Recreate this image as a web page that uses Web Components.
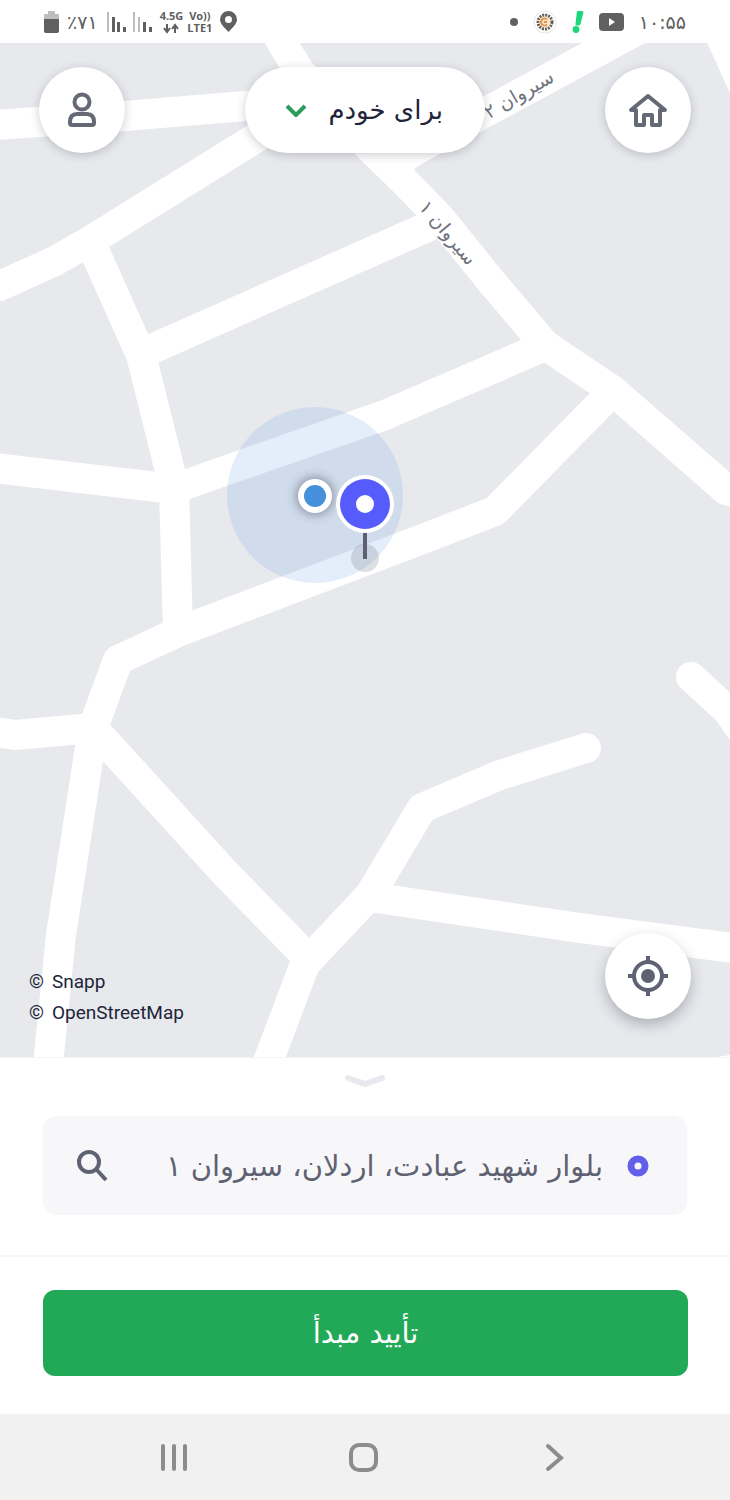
<!DOCTYPE html>
<html lang="fa">
<head>
<meta charset="utf-8">
<meta name="viewport" content="width=device-width, initial-scale=1">
<title>تأیید مبدأ</title>
<style>
  body {
    margin: 0;
    font-family: "DejaVu Sans", sans-serif;
    color: #21253a;
    background: #fff;
  }
</style>
</head>
<body>
<ride-app></ride-app>

<script>
(function () {
  // Registers an element whose shadow root is a clone of the given markup.
  function define(name, html) {
    const template = document.createElement("template");
    template.innerHTML = html;

    window.customElements.define(
      name,
      class extends HTMLElement {
        constructor() {
          super();
          this.attachShadow({ mode: "open" });
          this.shadowRoot.appendChild(template.content.cloneNode(true));
        }

        // Passes the host's label on to the real button.
        connectedCallback() {
          if (this.hasAttribute("label")) {
            this.shadowRoot
              .querySelector("button")
              .setAttribute("aria-label", this.getAttribute("label"));
          }
        }
      }
    );
  }

  define("status-bar", `
    <style>
      :host {
        display: flex;
        justify-content: space-between;
        align-items: center;
        height: 43px;
        padding: 0 44px;
        box-sizing: border-box;
        color: #606060;
        background: #fff;
      }
      .group {
        display: flex;
        align-items: center;
        gap: 8px;
      }
      .group.end {
        gap: 15px;
      }
      svg {
        display: block;
      }
      .digits {
        font-size: 19px;
        line-height: 24px;
      }
      .net {
        display: flex;
        flex-direction: column;
        align-items: center;
        font: bold 11px/12px "Open Sans", sans-serif;
      }
      .radio {
        display: flex;
        gap: 4px;
      }
    </style>
    <div class="group">
      <svg width="15" height="22" viewBox="0 0 15 22">
        <path fill="#bdbdbd" d="M4 0h7v3h3q1 0 1 1v5H0V4q0-1 1-1h3z"/>
        <path fill="#606060" d="M0 8h15v12q0 2-2 2H2q-2 0-2-2z"/>
      </svg>
      <span class="digits">٪۷۱</span>
      <svg width="46" height="20" viewBox="0 0 46 20" fill="#606060">
        <path fill="#bdbdbd" d="M1 0h2v20H1zM27 0h2v20h-2zM32 5h2v15h-2z"/>
        <path d="M6 5h3v15H6zM11 10h3v10h-3zM17 15h3v5h-3zM37 10h3v10h-3zM43 15h3v5h-3z"/>
      </svg>
      <div class="radio">
        <div class="net">
          <span>4.5G</span>
          <svg width="16" height="12" viewBox="0 0 16 12" fill="none" stroke="#606060" stroke-width="2">
            <path d="M4 2v8M1 6l3 4 3-4M12 11V3M9 7l3-4 3 4"/>
          </svg>
        </div>
        <div class="net"><span>Vo))</span><span>LTE1</span></div>
      </div>
      <svg width="17" height="22" viewBox="0 0 17 22">
        <path fill="#606060" fill-rule="evenodd" d="M8.500 0a8.500 8.500 0 0 1 8.500 8.500C17 13 12 17 8.500 21 5 17 0 13 0 8.500A8.500 8.500 0 0 1 8.500 0zm0 5a3.500 3.500 0 1 0 0 7 3.500 3.500 0 0 0 0-7z"/>
      </svg>
    </div>
    <div class="group end">
      <svg width="8" height="8" viewBox="0 0 8 8"><circle cx="4" cy="4" r="4" fill="#606060"/></svg>
      <svg width="24" height="24" viewBox="0 0 24 24" fill="none">
        <circle cx="12" cy="12" r="11" fill="#fff" stroke="#e6e6e6"/>
        <circle cx="12" cy="12" r="7" stroke="#6b5d50" stroke-width="3" stroke-dasharray="2 1"/>
        <circle cx="12" cy="12" r="5" fill="#f3e6d2"/>
        <path d="M14 9.500a3.500 3.500 0 1 0 0 5M11 12h3" stroke="#e8963f" stroke-width="2"/>
      </svg>
      <svg width="12" height="22" viewBox="0 0 12 22" fill="#1fd67a">
        <path d="M6 0h4q1.800 0 1.400 1.500L8.500 13q-.4 1.500-2 1.500H4.500q-1.400 0-1-1.500L4.800 1.200Q5 0 6 0z"/>
        <circle cx="4" cy="18.500" r="3.400"/>
      </svg>
      <svg width="25" height="18" viewBox="0 0 25 18">
        <rect width="25" height="18" rx="4" fill="#606060"/>
        <path d="M10 5l6 4-6 4z" fill="#fff"/>
      </svg>
      <span class="digits">۱۰:۵۵</span>
    </div>
  `);

  define("round-button", `
    <style>
      :host {
        display: block;
      }
      button {
        display: grid;
        place-items: center;
        width: 86px;
        height: 86px;
        padding: 0;
        border: 0;
        border-radius: 50%;
        background: #fff;
        box-shadow: 0 2px 10px rgba(40, 45, 60, 0.24);
        cursor: pointer;
      }
      :host([raised]) button {
        box-shadow: 0 6px 14px rgba(40, 45, 60, 0.3);
      }
    </style>
    <button type="button"><slot></slot></button>
  `);

  define("rider-picker", `
    <style>
      :host {
        display: grid;
        width: 240px;
        height: 86px;
        border-radius: 43px;
        background: #fff;
        box-shadow: 0 2px 10px rgba(40, 45, 60, 0.24);
      }
      select,
      svg {
        grid-area: 1 / 1;
      }
      select {
        appearance: none;
        width: 100%;
        padding: 0 42px;
        border: 0;
        border-radius: inherit;
        background: transparent;
        color: #21253a;
        font: inherit;
        font-size: 26px;
        cursor: pointer;
      }
      svg {
        align-self: center;
        margin-left: 40px;
        pointer-events: none;
      }
    </style>
    <select dir="rtl" aria-label="مسافر">
      <option>برای خودم</option>
    </select>
    <svg width="22" height="14" viewBox="0 0 22 14" fill="none" stroke="#2a9d5c" stroke-width="4">
      <path d="M2 3l9 9 9-9"/>
    </svg>
  `);

  define("street-map", `
    <style>
      :host {
        display: grid;
        min-height: 0;
        overflow: hidden;
        background: #e8e9ed;
      }
      .canvas,
      .controls {
        grid-area: 1 / 1;
      }
      .canvas {
        display: block;
        width: 100%;
        height: 100%;
        min-height: 0;
      }
      .controls {
        display: flex;
        flex-direction: column;
        justify-content: space-between;
      }
      .label {
        font-size: 19px;
        fill: #70737f;
        stroke: #fff;
        stroke-width: 3px;
        paint-order: stroke;
        text-anchor: middle;
        direction: rtl;
      }
    </style>
    <svg class="canvas" viewBox="0 43 730 1014" preserveAspectRatio="xMidYMid slice">
      <defs>
        <filter id="soft" x="-50%" y="-50%" width="200%" height="200%">
          <feGaussianBlur stdDeviation="4"/>
        </filter>
      </defs>
      <g fill="none" stroke="#fff" stroke-width="30" stroke-linejoin="round">
        <path d="M-5 125L125 116 245 106 320 100"/>
        <path d="M-5 288L55 261 90 241 262 134 320 98"/>
        <path d="M270 20L282 43 300 72 372 150 405 182 440 218 490 280 545 345 612 390 725 488"/>
        <path d="M700-5L645 26 412 152 395 165"/>
        <path d="M430 226L400 239 145 352"/>
        <path d="M90 241L141 355 174 487 178 632"/>
        <path d="M-5 468L174 489 210 476 385 415 545 346"/>
        <path d="M612 392L495 511 420 540 262 600 178 632 118 660 93 728 15 735-5 732"/>
        <path d="M93 728L61 935 48 1065"/>
        <path d="M93 728L225 873 307 957"/>
        <path d="M261 1080L305 964 370 895"/>
        <path d="M370 897L580 928 740 949"/>
        <path d="M721 37L750 101"/>
        <path d="M690 1076L745 1068"/>
        <g stroke-linecap="round">
          <path d="M370 895L422 808 500 775 586 748"/>
          <path d="M691 677L728 711 748 740"/>
          <path d="M612 390L726 490 760 500"/>
        </g>
      </g>
      <text class="label" transform="translate(443 237) rotate(50)">سیروان ۱</text>
      <text class="label" transform="translate(522 100) rotate(-30)">سیروان ۲</text>

      <circle cx="315" cy="495" r="88" fill="#4a90e2" fill-opacity="0.15"/>
      <circle cx="315" cy="496" r="20" fill="#3c465a" fill-opacity="0.4" filter="url(#soft)"/>
      <circle cx="315" cy="496" r="17" fill="#fff"/>
      <circle cx="315" cy="496" r="11" fill="#458fdd"/>

      <circle cx="365" cy="558" r="14" fill="#5a6070" fill-opacity="0.2"/>
      <path d="M365 530V559" stroke="#5c6070" stroke-width="4"/>
      <circle cx="365" cy="504" r="29" fill="#fff"/>
      <circle cx="365" cy="504" r="25" fill="#555cfb"/>
      <circle cx="365" cy="504" r="9" fill="#fff"/>
    </svg>
    <div class="controls">
      <slot name="top"></slot>
      <slot name="bottom"></slot>
    </div>
  `);

  define("pickup-sheet", `
    <style>
      :host {
        display: block;
        border-top: 1px solid #f4f4f6;
        background: #fff;
      }
      .handle {
        display: block;
        margin: 16px auto 28px;
      }
      .search {
        display: flex;
        align-items: center;
        gap: 24px;
        height: 99px;
        margin: 0 43px 40px;
        padding: 0 38px 0 32px;
        box-sizing: border-box;
        border-radius: 14px;
        background: #f7f7f9;
      }
      .search svg {
        display: block;
        flex: none;
      }
      .search button {
        padding: 0;
        border: 0;
        background: none;
        cursor: pointer;
      }
      input {
        flex: 1;
        min-width: 0;
        padding: 0;
        border: 0;
        outline: 0;
        background: none;
        color: #5f6272;
        font: inherit;
        font-size: 29px;
        line-height: 48px;
      }
      .footer {
        display: flex;
        padding: 33px 42px 38px 43px;
        border-top: 2px solid #f7f7f9;
      }
      .confirm {
        flex: 1;
        height: 86px;
        border: 0;
        border-radius: 12px;
        background: #22a957;
        color: #fff;
        font: inherit;
        font-size: 29px;
        cursor: pointer;
      }
    </style>
    <svg class="handle" width="42" height="14" viewBox="0 0 42 14" fill="none" stroke="#e8e9ef" stroke-width="6" stroke-linecap="round" stroke-linejoin="round">
      <path d="M4 4l17 6 17-6"/>
    </svg>
    <div class="search">
      <button type="button" aria-label="جستجو">
        <svg width="34" height="34" viewBox="0 0 34 34" fill="none" stroke="#5f6272" stroke-width="4">
          <circle cx="14" cy="13" r="10"/>
          <path d="M21 20l10 11"/>
        </svg>
      </button>
      <input dir="rtl" type="text" aria-label="مبدأ" value="بلوار شهید عبادت، اردلان، سیروان ۱">
      <svg width="22" height="22" viewBox="0 0 22 22" fill="none">
        <circle cx="11" cy="11" r="7" stroke="#635fea" stroke-width="7"/>
      </svg>
    </div>
    <div class="footer">
      <button class="confirm" type="button">تأیید مبدأ</button>
    </div>
  `);

  define("nav-bar", `
    <style>
      :host {
        display: flex;
        height: 86px;
        padding: 0 81px 0 79px;
        background: #f1f1f1;
      }
      button {
        display: grid;
        flex: 1;
        place-items: center;
        padding: 0;
        border: 0;
        background: none;
        cursor: pointer;
      }
      svg {
        fill: none;
        stroke: #8c8c8c;
        stroke-width: 4;
        stroke-linecap: round;
      }
    </style>
    <button type="button" aria-label="برنامه‌های اخیر">
      <svg width="30" height="30" viewBox="0 0 30 30"><path d="M4 4v23M15 4v23M26 4v23"/></svg>
    </button>
    <button type="button" aria-label="خانه">
      <svg width="30" height="30" viewBox="0 0 30 30"><rect x="2" y="3" width="25" height="25" rx="8"/></svg>
    </button>
    <button type="button" aria-label="بازگشت">
      <svg width="30" height="30" viewBox="0 0 30 30"><path d="M9 4l13 12L9 27"/></svg>
    </button>
  `);

  define("ride-app", `
    <style>
      :host {
        display: flex;
        flex-direction: column;
        min-height: 100vh;
      }
      street-map {
        flex: 1 1 0;
      }
      .top,
      .bottom {
        display: flex;
        justify-content: space-between;
      }
      .top {
        padding: 24px 39px;
      }
      .bottom {
        align-items: flex-end;
        padding: 0 39px 0 29px;
      }
      .bottom round-button {
        margin-bottom: 38px;
      }
      .credits {
        margin-bottom: 29px;
        font: 19px/31px Roboto, sans-serif;
      }
      .credits div {
        display: flex;
        gap: 8px;
      }
    </style>
    <status-bar></status-bar>
    <street-map>
      <div class="top" slot="top">
        <round-button label="حساب کاربری">
          <svg width="30" height="36" viewBox="0 0 30 36" fill="none" stroke="#656975" stroke-width="4">
            <circle cx="15" cy="10" r="7.500"/>
            <path d="M10 22h10q7 0 7 8v1q0 2-2 2H5q-2 0-2-2v-1q0-8 7-8z"/>
          </svg>
        </round-button>
        <rider-picker></rider-picker>
        <round-button label="خانه">
          <svg width="40" height="36" viewBox="0 0 40 36" fill="none" stroke="#656975" stroke-width="4" stroke-linejoin="round">
            <path d="M20 4L3 18H8V33H16V23H24V33H32V18H37Z"/>
          </svg>
        </round-button>
      </div>
      <div class="bottom" slot="bottom">
        <div class="credits">
          <div><span>©</span><span>Snapp</span></div>
          <div><span>©</span><span>OpenStreetMap</span></div>
        </div>
        <round-button label="موقعیت من" raised>
          <svg width="40" height="40" viewBox="0 0 40 40" fill="none" stroke="#5f6272" stroke-width="4">
            <circle cx="20" cy="20" r="14"/>
            <circle cx="20" cy="20" r="7" fill="#5f6272" stroke="none"/>
            <path d="M20 0v6M20 34v6M0 20h6M34 20h6"/>
          </svg>
        </round-button>
      </div>
    </street-map>
    <pickup-sheet></pickup-sheet>
    <nav-bar></nav-bar>
  `);
})();
</script>
</body>
</html>
